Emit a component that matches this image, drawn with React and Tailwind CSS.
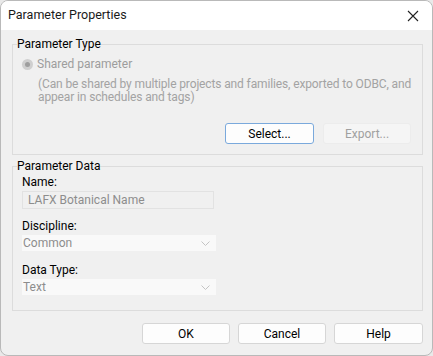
import React from "react";

const font = { fontFamily: '"Segoe UI", Roboto, "Noto Sans", sans-serif' };

const Chevron = () => (
  <svg width="9" height="5" viewBox="0 0 9 5" className="mr-[6px]">
    <path d="M0.5 0.5 L4.5 4.5 L8.5 0.5" fill="none" stroke="#c4c4c4" strokeWidth="1" />
  </svg>
);

const WinButton = ({ children, className = "", disabled, focused }) => (
  <button
    type="button"
    className={
      "h-[21px] text-[12px] leading-none rounded-[3px] border " +
      (disabled
        ? "bg-[#f5f5f5] border-[#ececec] text-[#a0a0a0] "
        : focused
        ? "bg-[#fdfdfd] border-[#7aa9dc] text-black "
        : "bg-[#fdfdfd] border-[#d6d6d6] text-black ") +
      className
    }
  >
    {children}
  </button>
);

const DropDown = ({ value }) => (
  <div className="mt-[2px] w-[194px] h-[16px] bg-[#f9f9f9] flex items-center justify-between pl-[1px]">
    <span className="text-[12px] leading-none text-[#8d8d8d]">{value}</span>
    <Chevron />
  </div>
);

export default function App() {
  return (
    <div className="w-[433px] h-[356px] bg-[#e9e9e9]" style={font}>
      <div className="w-full h-full rounded-[8px] border border-[#b9b9b9] overflow-hidden bg-[#f0f0f0] flex flex-col">
        {/* title bar */}
        <div className="h-[29px] bg-white flex items-center justify-between pl-[7px] pr-[13px] shrink-0">
          <span className="text-[12.5px] text-[#1a1a1a]">Parameter Properties</span>
          <svg width="12" height="12" viewBox="0 0 12 12">
            <path d="M1 1 L11 11 M11 1 L1 11" stroke="#222" strokeWidth="1.1" />
          </svg>
        </div>

        <div className="pl-[11px] pt-[7px] w-[433px]">
          {/* Parameter Type */}
          <fieldset className="w-[411px] min-w-0 border border-[#dcdcdc] pl-[9px] pr-[11px] pb-[10px]">
            <legend className="-ml-[5px] text-[12px] leading-[14px] text-black">Parameter Type</legend>
            <div className="mt-[6px] flex items-center h-[14px]">
              <span className="w-[11px] h-[11px] rounded-full bg-[#cfcfcf] flex items-center justify-center">
                <span className="w-[5px] h-[5px] rounded-full bg-[#9e9e9e]" />
              </span>
              <span className="ml-[4px] text-[12px] leading-[14px] text-[#9d9d9d]">Shared parameter</span>
            </div>
            <p className="mt-[7px] ml-[16px] whitespace-nowrap tracking-[-0.13px] text-[12px] leading-[13px] text-[#a3a3a3]">
              (Can be shared by multiple projects and families, exported to ODBC, and
              <br />
              appear in schedules and tags)
            </p>
            <div className="mt-[19px] flex justify-end gap-[9px]">
              <WinButton focused className="w-[89px]">Select...</WinButton>
              <WinButton disabled className="w-[88px]">Export...</WinButton>
            </div>
          </fieldset>

          {/* Parameter Data */}
          <fieldset className="mt-[4px] w-[411px] min-w-0 border border-[#dcdcdc] pl-[9px] pr-[11px] pb-[15px]">
            <legend className="-ml-[5px] text-[12px] leading-[14px] text-black">Parameter Data</legend>
            <div className="mt-[2px] text-[12px] leading-[14px] text-black">Name:</div>
            <div className="mt-[2px] w-[192px] h-[18px] border border-[#e2e2e2] bg-[#f0f0f0] flex items-center pl-[5px]">
              <span className="text-[12px] leading-none text-[#8d8d8d]">LAFX Botanical Name</span>
            </div>
            <div className="mt-[10px] text-[12px] leading-[14px] text-black">Discipline:</div>
            <DropDown value="Common" />
            <div className="mt-[12px] text-[12px] leading-[14px] text-black">Data Type:</div>
            <DropDown value="Text" />
          </fieldset>

          {/* dialog buttons */}
          <div className="mt-[12px] w-[411px] flex justify-end gap-[8px]">
            <WinButton className="w-[88px]">OK</WinButton>
            <WinButton className="w-[88px]">Cancel</WinButton>
            <WinButton className="w-[89px]">Help</WinButton>
          </div>
        </div>
      </div>
    </div>
  );
}
